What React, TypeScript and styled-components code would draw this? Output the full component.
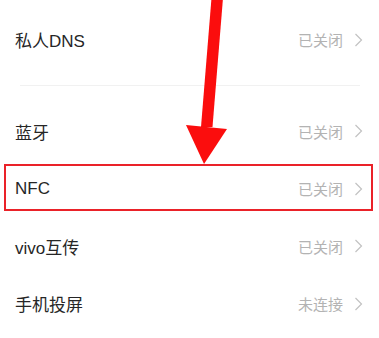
import React from "react";
import styled, { createGlobalStyle, css } from "styled-components";

const Global = createGlobalStyle`
  html, body { margin: 0; padding: 0; background: #ffffff; }
  body { font-family: "Liberation Sans", "Noto Sans CJK SC", sans-serif; }
`;

const Page = styled.div`
  position: relative;
  width: 379px;
  height: 338px;
  overflow: hidden;
  background: #ffffff;
  padding-top: 11px;
  box-sizing: border-box;
`;

const Row = styled.div<{ $highlight?: boolean }>`
  position: relative;
  display: flex;
  align-items: center;
  height: 57.5px;
  padding: 0 16px 0 15px;
  box-sizing: border-box;
  ${(p) =>
    p.$highlight &&
    css`
      &::after {
        content: "";
        position: absolute;
        left: 4px;
        right: 6px;
        top: 4px;
        bottom: 7px;
        border: 2px solid #ea2229;
        pointer-events: none;
      }
    `}
`;

const Title = styled.span`
  flex: 1;
  font-size: 17px;
  color: #262626;
  letter-spacing: 0;
`;

const Status = styled.span`
  font-size: 15px;
  color: #b3b3b3;
  margin-right: 11px;
`;

const Chevron = styled.svg`
  width: 9px;
  height: 14px;
  display: block;
`;

const SectionGap = styled.div`
  height: 34px;
  display: flex;
  align-items: center;
  padding: 0 19px 0 20px;
`;

const Divider = styled.div`
  flex: 1;
  height: 1px;
  background: #f1f1f1;
`;

const Arrow = styled.svg`
  position: absolute;
  left: 0;
  top: 0;
  width: 379px;
  height: 338px;
  pointer-events: none;
`;

type Item = { title: string; status: string; highlight?: boolean };

const Entry: React.FC<Item> = ({ title, status, highlight }) => (
  <Row $highlight={highlight}>
    <Title>{title}</Title>
    <Status>{status}</Status>
    <Chevron viewBox="0 0 9 14">
      <polyline points="1.5,1 7.5,7 1.5,13" fill="none" stroke="#c2c2c2" strokeWidth="1.2" />
    </Chevron>
  </Row>
);

const items: Item[] = [
  { title: "蓝牙", status: "已关闭" },
  { title: "NFC", status: "已关闭", highlight: true },
  { title: "vivo互传", status: "已关闭" },
  { title: "手机投屏", status: "未连接" },
];

export default function App() {
  return (
    <>
      <Global />
      <Page>
        <Entry title="私人DNS" status="已关闭" />
        <SectionGap>
          <Divider />
        </SectionGap>
        {items.map((it) => (
          <Entry key={it.title} {...it} />
        ))}
        <Arrow viewBox="0 0 379 338">
          <polygon points="211.5,-2 223,-2 212.5,127 201,127" fill="#fb0d0d" />
          <polygon points="186,125 227,129 204,164" fill="#fb0d0d" />
        </Arrow>
      </Page>
    </>
  );
}
